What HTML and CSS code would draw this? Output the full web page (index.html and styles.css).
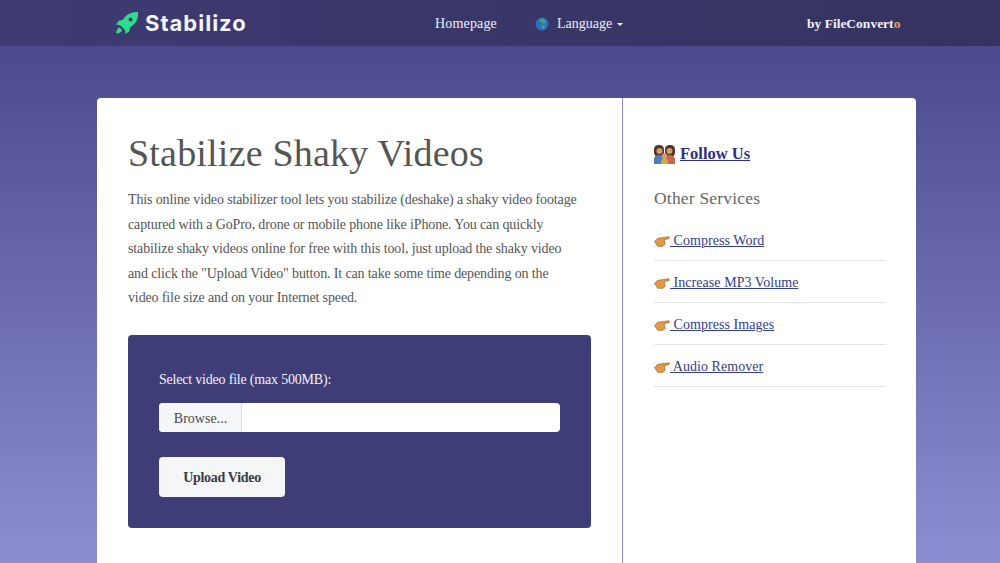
FILE: index.html
```html
<!doctype html>
<html>
<head>
    <title>Stabilizo - Stabilize Shaky Videos</title>
    <meta name="viewport" content="width=device-width, initial-scale=1.0">
    <link rel="stylesheet" href="styles.css">
</head>
<body>

    <nav class="navbar">
        <a class="brand" href="#">
            <svg class="rocket" width="24" height="24" viewBox="0 0 24 24">
                <path fill="#2fdc8f" d="M23 1c-5-.4-9.600 1.200-13 5L7.500 9 3.800 9.800 1 13.500l4.300 .8 4.500 4.500 .8 4.200 3.700-2.800 .8-3.700 3-2.500C22 11 23.400 6 23 1z"/>
                <circle cx="15.500" cy="8.500" r="2" fill="#3c3a70"/>
                <path fill="#2fdc8f" d="M4.500 16.500c-2 .8-3 3-3.300 6 3-.3 5.200-1.300 6-3.300z"/>
            </svg>
            Stabilizo
        </a>
        <div class="nav-links">
            <a href="#">Homepage</a>
            <a class="lang" href="#">
                <svg width="14" height="14" viewBox="0 0 14 14">
                    <circle cx="7" cy="7" r="6.500" fill="#2a6fc0"/>
                    <path fill="#3fa877" d="M5 1.500l4 .5 2 3-2 2-2-1.500-2-1zM7 8l3 .5-1 3.500-2-1z"/>
                </svg>
                Language <span class="caret"></span>
            </a>
        </div>
        <a class="by" href="#">by FileConvert<span class="orange">o</span></a>
    </nav>

    <main class="card">
        <section class="content">
            <h1>Stabilize Shaky Videos</h1>
            <p class="intro">
                This online video stabilizer tool lets you stabilize (deshake) a shaky video footage<br>
                captured with a GoPro, drone or mobile phone like iPhone. You can quickly<br>
                stabilize shaky videos online for free with this tool, just upload the shaky video<br>
                and click the "Upload Video" button. It can take some time depending on the<br>
                video file size and on your Internet speed.
            </p>
            <form class="upload-box">
                <label>Select video file (max 500MB):</label>
                <div class="file-input">
                    <span class="browse">Browse...</span>
                </div>
                <button type="button">Upload Video</button>
            </form>
        </section>

        <aside class="sidebar">
            <div class="follow">
                <svg width="21" height="19" viewBox="0 0 21 19">
                    <rect x="0" y="0" width="10" height="12" rx="4.500" fill="#4f3428"/>
                    <rect x="11" y="0" width="10" height="12" rx="4.500" fill="#4f3428"/>
                    <circle cx="5.500" cy="6" r="3" fill="#d99a68"/>
                    <circle cx="15.500" cy="6" r="3" fill="#d99a68"/>
                    <path fill="#4f7fb5" d="M0 19v-5c0-2 2-4 5-4s5 2 5 4v5z"/>
                    <path fill="#c4694e" d="M11 19v-5c0-2 2-4 4.500-4S21 12 21 14v5z"/>
                    <circle cx="10.500" cy="11" r="2.700" fill="#d99a68"/>
                    <path fill="#d9a83f" d="M7 19v-2.500c0-2 1.500-3 3.500-3s3.500 1 3.500 3V19z"/>
                </svg>
                <a href="#">Follow Us</a>
            </div>
            <h2>Other Services</h2>
            <ul class="services">
                <li><a href="#"><svg class="hand" width="16" height="11" viewBox="0 0 15 10"><path fill="#e39a45" stroke="#9c5a20" stroke-width=".6" d="M.5 5l3-3 4-.5 6.500-1 .5 1.500-5 1.500 1 4-2 2H3.500z"/></svg> Compress Word</a></li>
                <li><a href="#"><svg class="hand" width="16" height="11" viewBox="0 0 15 10"><path fill="#e39a45" stroke="#9c5a20" stroke-width=".6" d="M.5 5l3-3 4-.5 6.500-1 .5 1.500-5 1.500 1 4-2 2H3.500z"/></svg> Increase MP3 Volume</a></li>
                <li><a href="#"><svg class="hand" width="16" height="11" viewBox="0 0 15 10"><path fill="#e39a45" stroke="#9c5a20" stroke-width=".6" d="M.5 5l3-3 4-.5 6.500-1 .5 1.500-5 1.500 1 4-2 2H3.500z"/></svg> Compress Images</a></li>
                <li><a href="#"><svg class="hand" width="16" height="11" viewBox="0 0 15 10"><path fill="#e39a45" stroke="#9c5a20" stroke-width=".6" d="M.5 5l3-3 4-.5 6.500-1 .5 1.500-5 1.500 1 4-2 2H3.500z"/></svg> Audio Remover</a></li>
            </ul>
        </aside>
    </main>

</body>
</html>
```

FILE: styles.css
```css
body {
    font-family: "Liberation Serif", serif;
    margin: 0;
    height: 563px;
    overflow: hidden;
    background: linear-gradient(180deg, #4a4a8c 46px, #8d8dd2 563px);
    color: #4a4a4a;
}
a {
    color: inherit;
    text-decoration: none;
}
.navbar {
    display: flex;
    align-items: center;
    height: 46px;
    padding: 2px 90px 0 115px;
    box-sizing: border-box;
    background: linear-gradient(90deg, #3d3b72, #35335f);
    color: #eeeef6;
    font-size: 14px;
}
.brand {
    display: flex;
    align-items: center;
    gap: 6px;
    width: 320px;
    margin-top: -2px;
    font-family: "Inter", sans-serif;
    font-size: 22px;
    font-weight: 700;
    letter-spacing: 1px;
    color: #f4f4fa;
}
.nav-links {
    display: flex;
    align-items: center;
    gap: 38px;
    width: 372px;
    letter-spacing: .17px;
}
.lang {
    display: flex;
    align-items: center;
    gap: 8px;
    letter-spacing: 0;
}
.caret {
    width: 0;
    height: 0;
    margin-left: -3px;
    margin-top: 3px;
    border: 3px solid transparent;
    border-top: 3px solid #eeeef6;
}
.by {
    font-weight: bold;
    font-size: 13.500px;
    white-space: nowrap;
    color: #f2f2f8;
}
.orange {
    color: #e8a468;
}
.card {
    display: grid;
    grid-template-columns: 526px 1fr;
    width: 819px;
    height: 465px;
    margin: 52px 0 0 97px;
    background: #fff;
    border-radius: 4px 4px 0 0;
}
.content {
    padding: 30px 31px;
    border-right: 1px solid #8d8dc4;
}
h1 {
    margin: 0 0 10px;
    font-size: 38px;
    line-height: 50px;
    font-weight: 400;
    letter-spacing: .2px;
    color: #555;
}
.intro {
    height: 123px;
    margin: 0 0 24px;
    font-size: 14px;
    line-height: 24.600px;
    letter-spacing: -.13px;
    white-space: nowrap;
    color: #555;
}
.upload-box {
    height: 193px;
    box-sizing: border-box;
    padding: 34px 31px;
    background: #3f3d77;
    border-radius: 4px;
}
.upload-box label {
    display: block;
    margin-bottom: 12px;
    font-size: 14px;
    line-height: 22px;
    letter-spacing: -.2px;
    color: #f2f2f8;
}
.file-input {
    display: flex;
    height: 29px;
    background: #fff;
    border-radius: 4px;
    overflow: hidden;
}
.browse {
    width: 83px;
    padding-left: 1px;
    box-sizing: border-box;
    line-height: 31px;
    text-align: center;
    font-size: 14px;
    letter-spacing: 0;
    background: #f5f6f8;
    border-right: 1px solid #dcdce6;
}
button {
    display: block;
    width: 126px;
    height: 40px;
    margin-top: 25px;
    padding: 2px 0 0;
    font-family: inherit;
    font-size: 14px;
    font-weight: bold;
    letter-spacing: -.3px;
    color: #3a3a4a;
    background: #f5f6f8;
    border: none;
    border-radius: 4px;
}
.sidebar {
    padding: 44px 30px 0 31px;
}
.follow {
    display: flex;
    align-items: center;
    gap: 5px;
    height: 24px;
    font-size: 16.500px;
    font-weight: bold;
    color: #2c2f85;
}
.follow a {
    text-decoration: underline;
}
h2 {
    margin: 20px 0 0;
    font-size: 17.500px;
    line-height: 24px;
    font-weight: 400;
    letter-spacing: .2px;
    color: #666;
}
.services {
    list-style: none;
    margin: 21px 0 0;
    padding: 0;
    font-size: 14px;
    letter-spacing: .05px;
    color: #34408a;
}
.services li {
    height: 29px;
    line-height: 20px;
    margin-bottom: 12px;
    border-bottom: 1px solid #e4e4e4;
}
.services a {
    text-decoration: underline;
}
.hand {
    vertical-align: -2px;
}
```
